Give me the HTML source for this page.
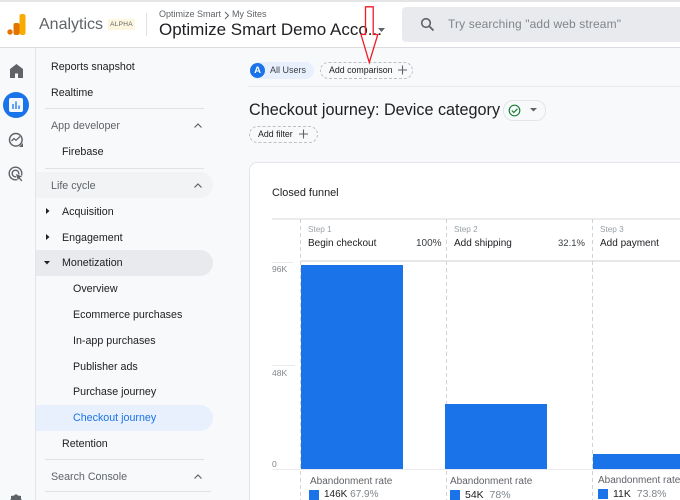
<!DOCTYPE html>
<html>
<head>
<meta charset="utf-8">
<style>
html,body{margin:0;padding:0;width:680px;height:500px;overflow:hidden}
#w{position:absolute;left:0;top:0;width:680px;height:500px;overflow:hidden;background:#f8f9fb;font-family:"Liberation Sans",sans-serif;color:#202124}
.a{position:absolute}
.t{position:absolute;white-space:nowrap;font-size:10.7px;line-height:14px}
.n{color:#202124;font-size:10.7px}
.g{color:#5f6368}
.l{position:absolute;background:#dfe1e5}
.dv{position:absolute;width:1px;background:repeating-linear-gradient(to bottom,#d0d2d5 0,#d0d2d5 4px,transparent 4px,transparent 7px)}
svg{position:absolute;overflow:visible}
</style>
</head>
<body>
<div id="w">
<!-- top bar -->
<div class="a" style="left:0;top:0;width:680px;height:47px;background:#fff"></div>
<div class="l" style="left:0;top:0;width:680px;height:2px;background:#e4e5e7"></div>
<div class="l" style="left:0;top:47px;width:680px;height:1px;background:#dadce0"></div>
<svg style="left:7px;top:14px" width="19" height="22">
<rect x="12.500" y="0" width="6" height="21" rx="2.200" fill="#f9ab00"/>
<rect x="6.500" y="9" width="6" height="12" rx="2" fill="#e37400"/>
<circle cx="3" cy="18" r="2.700" fill="#e37400"/>
</svg>
<div class="t" style="left:39px;top:15px;font-size:16px;line-height:20px;color:#5f6368">Analytics</div>
<div class="a" style="left:108px;top:19px;width:27px;height:11px;background:#fef7e0"></div>
<div class="t" style="left:108px;top:19px;width:27px;text-align:center;font-size:6.500px;line-height:11px;letter-spacing:.3px;color:#5f6368">ALPHA</div>
<div class="l" style="left:146px;top:13px;width:1px;height:23px"></div>
<div class="t" style="left:159px;top:8px;font-size:9px;line-height:13px;color:#5f6368">Optimize Smart</div>
<svg style="left:224px;top:11px" width="6" height="8"><path d="M1 1l3.500 3.500L1 8" fill="none" stroke="#5f6368" stroke-width="1"/></svg>
<div class="t" style="left:232px;top:8px;font-size:9px;line-height:13px;color:#5f6368">My Sites</div>
<div class="t" style="left:159px;top:20px;font-size:17px;line-height:20px;color:#202124">Optimize Smart Demo Acco...</div>
<svg style="left:378px;top:28px" width="7" height="4"><path d="M0 0h7L3.500 4z" fill="#5f6368"/></svg>
<div class="a" style="left:402px;top:7px;width:290px;height:35px;background:#e8eaed;border-radius:4px"></div>
<svg style="left:420px;top:17px" width="15" height="15"><circle cx="6" cy="6" r="4.300" fill="none" stroke="#5f6368" stroke-width="1.600"/><path d="M9 9l4.500 4.500" stroke="#5f6368" stroke-width="1.800"/></svg>
<div class="t" style="left:448px;top:16px;font-size:12px;line-height:16px;color:#80868b;letter-spacing:.12px">Try searching "add web stream"</div>

<!-- rail -->
<div class="l" style="left:35px;top:48px;width:1px;height:452px;background:#e3e5e8"></div>
<svg style="left:10px;top:64px" width="13" height="14"><path d="M6.500 0L13 5v9H8V9.500H5V14H0V5z" fill="#5f6368"/></svg>
<div class="a" style="left:3px;top:92px;width:26px;height:26px;border-radius:50%;background:#1a73e8"></div>
<div class="a" style="left:9px;top:98px;width:14px;height:14px;border-radius:2px;background:#f4f7fd"></div>
<svg style="left:9px;top:98px" width="14" height="14"><path d="M4 6v5M7 3.500V11M10 7.500V11" stroke="#1a73e8" stroke-width="1.300"/></svg>
<svg style="left:8px;top:132px" width="16" height="16"><circle cx="7.800" cy="7.800" r="6.300" fill="none" stroke="#5f6368" stroke-width="1.500"/><path d="M3.500 9l2.500-2.500 2 1.800L12 4.500" fill="none" stroke="#5f6368" stroke-width="1.300"/><path d="M11 15h4v-4z" fill="#5f6368"/></svg>
<svg style="left:8px;top:166px" width="17" height="17"><circle cx="7.500" cy="7.500" r="6.300" fill="none" stroke="#5f6368" stroke-width="1.400"/><circle cx="7.500" cy="7.500" r="3.300" fill="none" stroke="#5f6368" stroke-width="1.400"/><path d="M7.500 7.500l7.500 3-2.800 1 2.600 3-1.400 1.300-2.600-2.900-1 2.600z" fill="#5f6368" stroke="#f8f9fb" stroke-width=".6"/></svg>
<svg style="left:8px;top:494px" width="16" height="16"><path d="M8 0l2 1.500 3 .5v3l2 2-2 2v3l-3 .5L8 14l-2-1.500-3-.5V9L1 7l2-2V2l3-.5z" fill="#5f6368"/></svg>

<!-- side nav -->
<div class="t n" style="left:51px;top:60px">Reports snapshot</div>
<div class="t n" style="left:51px;top:86px">Realtime</div>
<div class="l" style="left:45px;top:108px;width:159px;height:1px"></div>
<div class="t g" style="left:51px;top:119px">App developer</div>
<svg style="left:194px;top:123px" width="8" height="6"><path d="M.5 4.500L4 1l3.500 3.500" fill="none" stroke="#5f6368" stroke-width="1.200"/></svg>
<div class="t n" style="left:62px;top:145px">Firebase</div>
<div class="l" style="left:45px;top:168px;width:159px;height:1px"></div>
<div class="a" style="left:36px;top:172px;width:177px;height:26px;background:#f1f3f4;border-radius:0 13px 13px 0"></div>
<div class="t g" style="left:51px;top:179px">Life cycle</div>
<svg style="left:194px;top:183px" width="8" height="6"><path d="M.5 4.500L4 1l3.500 3.500" fill="none" stroke="#5f6368" stroke-width="1.200"/></svg>
<svg style="left:46px;top:208px" width="4" height="6"><path d="M0 0l3.500 3L0 6z" fill="#202124"/></svg>
<div class="t n" style="left:62px;top:205px">Acquisition</div>
<svg style="left:46px;top:234px" width="4" height="6"><path d="M0 0l3.500 3L0 6z" fill="#202124"/></svg>
<div class="t n" style="left:62px;top:231px">Engagement</div>
<div class="a" style="left:36px;top:250px;width:177px;height:26px;background:#e8eaed;border-radius:0 13px 13px 0"></div>
<svg style="left:44px;top:261px" width="6" height="4"><path d="M0 0h6L3 3.500z" fill="#202124"/></svg>
<div class="t n" style="left:62px;top:256px">Monetization</div>
<div class="t n" style="left:73px;top:282px">Overview</div>
<div class="t n" style="left:73px;top:308px">Ecommerce purchases</div>
<div class="t n" style="left:73px;top:334px">In-app purchases</div>
<div class="t n" style="left:73px;top:360px">Publisher ads</div>
<div class="t n" style="left:73px;top:385px">Purchase journey</div>
<div class="a" style="left:36px;top:405px;width:177px;height:26px;background:#e8f0fe;border-radius:0 13px 13px 0"></div>
<div class="t" style="left:73px;top:411px;color:#1a73e8">Checkout journey</div>
<div class="t n" style="left:62px;top:437px">Retention</div>
<div class="l" style="left:45px;top:459px;width:159px;height:1px"></div>
<div class="t g" style="left:51px;top:470px">Search Console</div>
<svg style="left:194px;top:474px" width="8" height="6"><path d="M.5 4.500L4 1l3.500 3.500" fill="none" stroke="#5f6368" stroke-width="1.200"/></svg>
<div class="l" style="left:45px;top:491px;width:166px;height:1px"></div>

<!-- chips -->
<div class="a" style="left:250px;top:62px;width:64px;height:17px;background:#e8f0fe;border-radius:9px"></div>
<div class="a" style="left:250px;top:63px;width:15px;height:15px;border-radius:50%;background:#1a73e8;color:#fff;font-size:9.500px;line-height:15px;text-align:center;font-weight:bold">A</div>
<div class="t" style="left:270px;top:64px;font-size:9px;line-height:13px;color:#3c4043">All Users</div>
<div class="a" style="left:320px;top:62px;width:91px;height:15px;border:1px dashed #bdc1c6;border-radius:9px"></div>
<div class="t" style="left:329px;top:64px;font-size:8.800px;line-height:13px;color:#202124">Add comparison</div>
<svg style="left:398px;top:65px" width="9" height="10"><path d="M4.500 .5v9M0 5h9" stroke="#5f6368" stroke-width="1.100"/></svg>
<div class="l" style="left:248px;top:86px;width:432px;height:1px;background:#e8eaed"></div>

<div class="t" style="left:249px;top:100px;font-size:16.200px;line-height:21px;color:#202124">Checkout journey: Device category</div>
<div class="a" style="left:503px;top:100px;width:41px;height:19px;border:1px solid #e3e5e8;border-radius:10px"></div>
<svg style="left:508px;top:104px" width="13" height="13"><circle cx="6.500" cy="6.500" r="5.300" fill="none" stroke="#188038" stroke-width="1.200"/><path d="M3.800 6.500l2 2 3.600-3.700" fill="none" stroke="#188038" stroke-width="1.200"/></svg>
<svg style="left:530px;top:108px" width="7" height="4"><path d="M0 0h7L3.500 3.500z" fill="#5f6368"/></svg>
<div class="a" style="left:249px;top:126px;width:67px;height:15px;border:1px dashed #bdc1c6;border-radius:9px"></div>
<div class="t" style="left:258px;top:128px;font-size:8.800px;line-height:13px;color:#202124">Add filter</div>
<svg style="left:299px;top:129px" width="9" height="10"><path d="M4.500 .5v9M0 5h9" stroke="#5f6368" stroke-width="1.100"/></svg>

<!-- card -->
<div class="a" style="left:249px;top:162px;width:460px;height:360px;background:#fff;border:1px solid #e3e5e8;border-radius:8px"></div>
<div class="t" style="left:272px;top:186px;font-size:10.900px;line-height:14px;color:#202124">Closed funnel</div>
<div class="l" style="left:272px;top:218px;width:408px;height:2px;background:#ececee"></div>
<div class="l" style="left:301px;top:260px;width:379px;height:2px;background:#e6e7e9"></div>
<div class="l" style="left:272px;top:262px;width:21px;height:1px;background:#e8eaed"></div>
<div class="l" style="left:272px;top:365px;width:23px;height:1px;background:#e8eaed"></div>
<div class="l" style="left:272px;top:469px;width:408px;height:1px;background:#e8eaed"></div>
<div class="dv" style="left:300px;top:219px;height:281px"></div>
<div class="dv" style="left:446px;top:219px;height:281px"></div>
<div class="dv" style="left:592px;top:219px;height:281px"></div>

<div class="t" style="left:308px;top:224px;font-size:8.200px;line-height:12px;color:#9aa0a6">Step 1</div>
<div class="t" style="left:308px;top:237px;font-size:10px;line-height:14px">Begin checkout</div>
<div class="t" style="left:416px;top:237px;font-size:10px;line-height:14px;color:#3c4043">100%</div>
<div class="t" style="left:454px;top:224px;font-size:8.200px;line-height:12px;color:#9aa0a6">Step 2</div>
<div class="t" style="left:454px;top:237px;font-size:10px;line-height:14px">Add shipping</div>
<div class="t" style="left:558px;top:237px;font-size:9.500px;line-height:14px;color:#3c4043">32.1%</div>
<div class="t" style="left:600px;top:224px;font-size:8.200px;line-height:12px;color:#9aa0a6">Step 3</div>
<div class="t" style="left:600px;top:237px;font-size:10px;line-height:14px">Add payment</div>

<div class="t" style="left:272px;top:263px;font-size:8.500px;line-height:12px;color:#80868b">96K</div>
<div class="t" style="left:272px;top:367px;font-size:8.500px;line-height:12px;color:#80868b">48K</div>
<div class="t" style="left:272px;top:458px;font-size:8.500px;line-height:12px;color:#80868b">0</div>

<div class="a" style="left:301px;top:265px;width:102px;height:204px;background:#1a73e8"></div>
<div class="a" style="left:445px;top:404px;width:102px;height:65px;background:#1a73e8"></div>
<div class="a" style="left:593px;top:454px;width:87px;height:15px;background:#1a73e8"></div>

<div class="t" style="left:310px;top:475px;font-size:10px;line-height:14px;color:#5f6368">Abandonment rate</div>
<div class="a" style="left:309px;top:490px;width:10px;height:10px;background:#1a73e8"></div>
<div class="t" style="left:324px;top:488px;font-size:10px;line-height:14px">146K <span style="color:#80868b">67.9%</span></div>
<div class="t" style="left:450px;top:475px;font-size:10px;line-height:14px;color:#5f6368">Abandonment rate</div>
<div class="a" style="left:450px;top:490px;width:10px;height:10px;background:#1a73e8"></div>
<div class="t" style="left:465px;top:488px;font-size:10.500px;line-height:14px">54K &nbsp;<span style="color:#80868b">78%</span></div>
<div class="t" style="left:598px;top:474px;font-size:10px;line-height:14px;color:#5f6368">Abandonment rate</div>
<div class="a" style="left:598px;top:489px;width:10px;height:10px;background:#1a73e8"></div>
<div class="t" style="left:613px;top:487px;font-size:10.500px;line-height:14px">11K &nbsp;<span style="color:#80868b">73.8%</span></div>

<!-- red arrow -->
<svg style="left:360px;top:6px" width="20" height="58"><path d="M5.500 .8H13.200V28.500H17.800L9.300 56.500L1 28.500H5.500Z" fill="none" stroke="#ee1c25" stroke-width="1.300"/></svg>
</div>
</body>
</html>
